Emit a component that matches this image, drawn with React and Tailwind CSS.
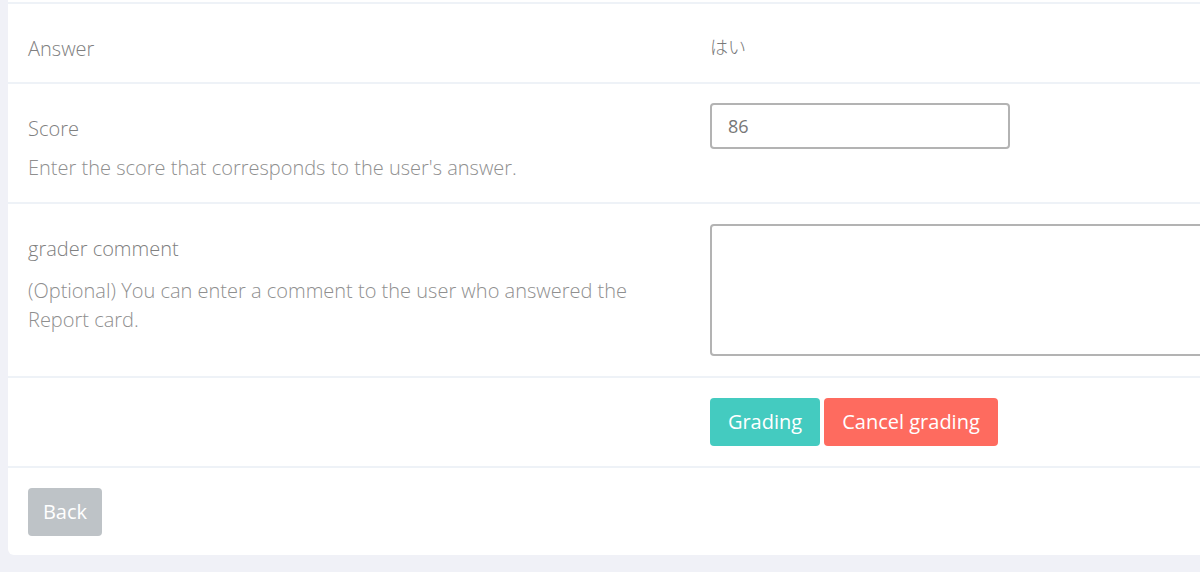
import React, { useState } from 'react';

const Row = ({ label, help, helpClass = 'mt-[11px]', children }) => (
  <div className="grid grid-cols-[682px_1fr] border-b-2 border-[#eef2f7]">
    <div className="px-[20px] pt-[20px] pb-[20px]">
      <div className="pt-[11px] leading-[27px] text-[#808080]">{label}</div>
      {help && (
        <p className={`${helpClass} leading-[29px] text-[#8f8f8f] max-w-[620px]`}>{help}</p>
      )}
    </div>
    <div className="px-[20px] pt-[20px] pb-[20px]">{children}</div>
  </div>
);

const App = () => {
  const [score, setScore] = useState('86');
  const [comment, setComment] = useState('');

  return (
    <div
      className="min-h-[572px] bg-[#f0f1f7] pl-[8px] overflow-hidden text-[20px] font-light"
      style={{ fontFamily: '"Open Sans", "Noto Sans CJK JP", sans-serif' }}
    >
      <div className="w-[1400px] bg-white rounded-b-[6px] pt-[2px]">
        <div className="border-t-2 border-[#eef2f7]" />

        {/* Answer */}
        <Row label="Answer">
          <div className="pt-[10px] leading-[27px] text-[18px] text-[#777]">はい</div>
        </Row>

        {/* Score */}
        <Row label="Score" help="Enter the score that corresponds to the user's answer.">
          <input
            type="text"
            value={score}
            onChange={(e) => setScore(e.target.value)}
            className="-mt-[1px] w-[300px] h-[46px] border-2 border-[#b3b3b3] rounded-[4px] px-[16px] text-[18px] text-[#777] font-normal outline-none"
          />
        </Row>

        {/* Comment */}
        <Row
          label="grader comment"
          help="(Optional) You can enter a comment to the user who answered the Report card."
          helpClass="mt-[14px]"
        >
          <textarea
            value={comment}
            onChange={(e) => setComment(e.target.value)}
            className="block w-[640px] h-[132px] border-2 border-[#b3b3b3] rounded-[4px] px-[16px] py-[10px] text-[18px] text-[#777] outline-none resize-none"
          />
        </Row>

        {/* Actions */}
        <div className="grid grid-cols-[682px_1fr] border-b-2 border-[#eef2f7]">
          <div />
          <div className="px-[20px] pt-[20px] pb-[20px] flex gap-[4px]">
            <button className="h-[48px] w-[110px] rounded-[4px] bg-[#44cbc0] text-white font-normal">
              Grading
            </button>
            <button className="h-[48px] w-[174px] rounded-[4px] bg-[#fe6b5f] text-white font-normal">
              Cancel grading
            </button>
          </div>
        </div>

        {/* Footer */}
        <div className="px-[20px] pt-[20px] pb-[19px]">
          <button className="h-[48px] w-[74px] rounded-[4px] bg-[#bec3c7] text-white font-normal">
            Back
          </button>
        </div>
      </div>
    </div>
  );
};

export default App;
